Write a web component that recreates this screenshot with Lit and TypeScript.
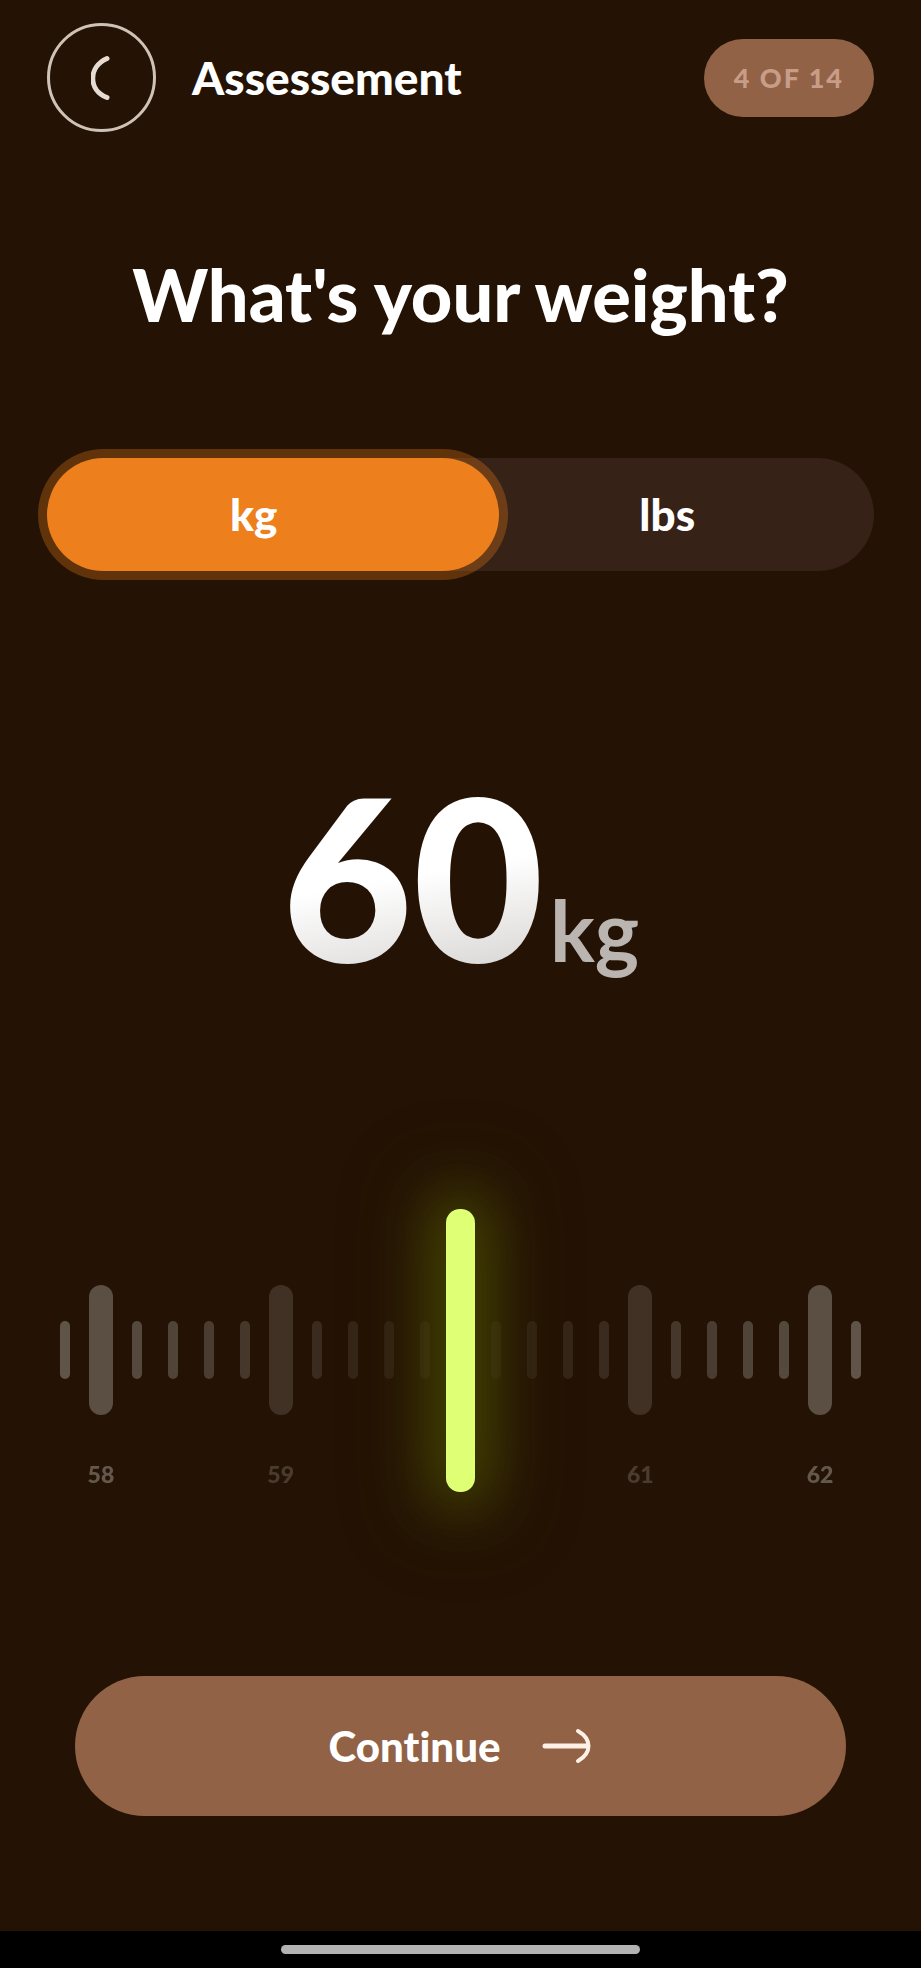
import { LitElement, html, css, nothing } from "lit";
import { customElement, state } from "lit/decorators.js";
import { classMap } from "lit/directives/class-map.js";
import { styleMap } from "lit/directives/style-map.js";

type Unit = "kg" | "lbs";

/** Ruler of ticks around the current weight, with a glowing slider thumb. */
@customElement("weight-ruler")
class WeightRuler extends LitElement {
  static styles = css`
    :host {
      display: grid;
    }
    .ticks,
    .slider {
      grid-area: 1 / 1;
    }
    .ticks {
      display: grid;
      grid-auto-flow: column;
      grid-auto-columns: minmax(0, 1fr);
      padding-top: 76px;
    }
    .column {
      display: grid;
      grid-template-rows: 130px 32px;
      row-gap: 43px;
      place-items: center;
    }
    .tick {
      width: 10px;
      height: 58px;
      border-radius: 5px;
      background: #fff;
    }
    .tick.major {
      width: 24px;
      height: 130px;
      border-radius: 12px;
    }
    .label {
      font-size: 23px;
      line-height: 32px;
      font-weight: 900;
      color: #fff;
    }
    .slider {
      appearance: none;
      width: 100%;
      height: 283px;
      margin: 0;
      background: transparent;
      outline: none;
      cursor: grab;
    }
    .slider::-webkit-slider-runnable-track {
      height: 283px;
      background: transparent;
    }
    .slider::-webkit-slider-thumb {
      appearance: none;
      width: 29px;
      height: 283px;
      border: 0;
      border-radius: 14px;
      background: #dfff74;
      box-shadow:
        0 0 56px 18px rgba(80, 88, 0, 0.72),
        0 0 60px 60px rgba(60, 44, 24, 0.1);
    }
  `;

  render() {
    const offsets = Array.from({ length: 23 }, (_, i) => i - 11);
    return html`
      <div class="ticks" aria-hidden="true">
        ${offsets.map((offset) => {
          const distance = Math.abs(offset);
          const major = distance % 5 === 0;
          const fade = 0.01 + distance * 0.024;
          return html`<div class="column">
            ${distance === 0
              ? nothing
              : html`<span
                    class=${classMap({ tick: true, major })}
                    style=${styleMap({ opacity: String(fade) })}
                  ></span>
                  ${major
                    ? html`<span class="label" style=${styleMap({ opacity: String(fade + 0.04) })}
                        >${60 + offset / 5}</span
                      >`
                    : nothing}`}
          </div>`;
        })}
      </div>
      <input class="slider" type="range" min="58" max="62" step="0.2" value="60" aria-label="Weight" />
    `;
  }
}

@customElement("app-root")
class AppRoot extends LitElement {
  @state() private unit: Unit = "kg";

  static styles = css`
    :host {
      display: flex;
      flex-direction: column;
      min-height: 100vh;
      background: #241304;
      color: #fff;
      font-family: Lato, "Open Sans", sans-serif;
      font-weight: 900;
      font-variant-ligatures: none;
    }
    .header {
      display: flex;
      align-items: center;
      gap: 36px;
      padding: 23px 47px 0;
    }
    .back {
      display: grid;
      place-items: center;
      width: 109px;
      height: 109px;
      padding: 0;
      border: 3px solid #cfc3b8;
      border-radius: 50%;
      background: none;
      color: #e6dcd3;
    }
    .title {
      margin: 0;
      flex: 1;
      font-size: 46px;
      line-height: 56px;
      font-weight: 900;
    }
    .badge {
      padding: 19px 30px;
      border-radius: 40px;
      background: #916246;
      color: #c89d87;
      font-size: 27px;
      line-height: 40px;
      letter-spacing: 2px;
    }
    .main {
      display: flex;
      flex-direction: column;
      padding: 0 47px;
    }
    .question {
      margin: 114px 0 0;
      font-size: 72px;
      line-height: 96px;
      font-weight: 900;
      text-align: center;
    }
    .units {
      display: grid;
      grid-template-columns: 1fr 1fr;
      margin: 116px 0 0;
      padding: 0;
      border: 0;
      border-radius: 57px;
      background: #362216;
      isolation: isolate;
    }
    .unit {
      position: relative;
      padding: 28px 0;
      font-size: 44px;
      line-height: 57px;
      text-align: center;
      cursor: pointer;
    }
    .unit.selected::before {
      content: "";
      position: absolute;
      z-index: -1;
      inset: 0 -38px 0 0;
      border-radius: 57px;
      background: #ed7f1c;
      box-shadow: 0 0 0 9px rgba(237, 127, 28, 0.3);
    }
    .unit.selected:last-child::before {
      inset: 0 0 0 -38px;
    }
    .radio {
      position: absolute;
      opacity: 0;
      margin: 0;
    }
    .value {
      display: flex;
      justify-content: center;
      align-items: baseline;
      gap: 6px;
      margin: 164px 0 0;
    }
    .number {
      font-size: 226px;
      line-height: 280px;
      background: linear-gradient(170deg, #fff 50%, #dcdad8 82%);
      background-clip: text;
      -webkit-background-clip: text;
      color: transparent;
    }
    .suffix {
      font-size: 84px;
      line-height: 100px;
      font-weight: 700;
      color: #bab5b0;
    }
    .ruler {
      margin-top: 194px;
    }
    .continue {
      display: flex;
      justify-content: center;
      align-items: center;
      gap: 42px;
      margin: 184px 28px 0;
      padding: 42px 0;
      border: 0;
      border-radius: 70px;
      background: #916246;
      color: #fff;
      font: inherit;
      font-variant-ligatures: none;
      font-size: 42px;
      line-height: 56px;
    }
    .home {
      display: grid;
      place-items: center;
      height: 37px;
      margin-top: auto;
      background: #000;
    }
    .handle {
      width: 39%;
      height: 9px;
      border-radius: 5px;
      background: #b3b3b3;
    }
  `;

  private unitOption(unit: Unit) {
    const selected = this.unit === unit;
    return html`<label class=${classMap({ unit: true, selected })}>
      <input
        class="radio"
        type="radio"
        name="unit"
        .checked=${selected}
        @change=${() => (this.unit = unit)}
      />${unit}
    </label>`;
  }

  render() {
    return html`
      <header class="header">
        <button class="back" type="button" aria-label="Back">
          <svg width="22" height="48" viewBox="0 0 22 48" fill="none" stroke="currentColor" stroke-width="5" stroke-linecap="round">
            <path d="M16 4.500C-3 13-3 36 16 43.500" />
          </svg>
        </button>
        <h1 class="title">Assessement</h1>
        <span class="badge">4 OF 14</span>
      </header>
      <main class="main">
        <h2 class="question">What's your weight?</h2>
        <fieldset class="units" aria-label="Unit">
          ${this.unitOption("kg")}${this.unitOption("lbs")}
        </fieldset>
        <div class="value">
          <span class="number">60</span><span class="suffix">${this.unit}</span>
        </div>
        <weight-ruler class="ruler"></weight-ruler>
        <button class="continue" type="button">
          Continue
          <svg width="50" height="38" viewBox="0 0 50 38" fill="none" stroke="#fff1e8" stroke-width="4" stroke-linecap="round">
            <path d="M3 19H45" stroke-width="5" />
            <path d="M36 4C50 12 50 26 36 34" />
          </svg>
        </button>
      </main>
      <footer class="home"><span class="handle"></span></footer>
    `;
  }
}
